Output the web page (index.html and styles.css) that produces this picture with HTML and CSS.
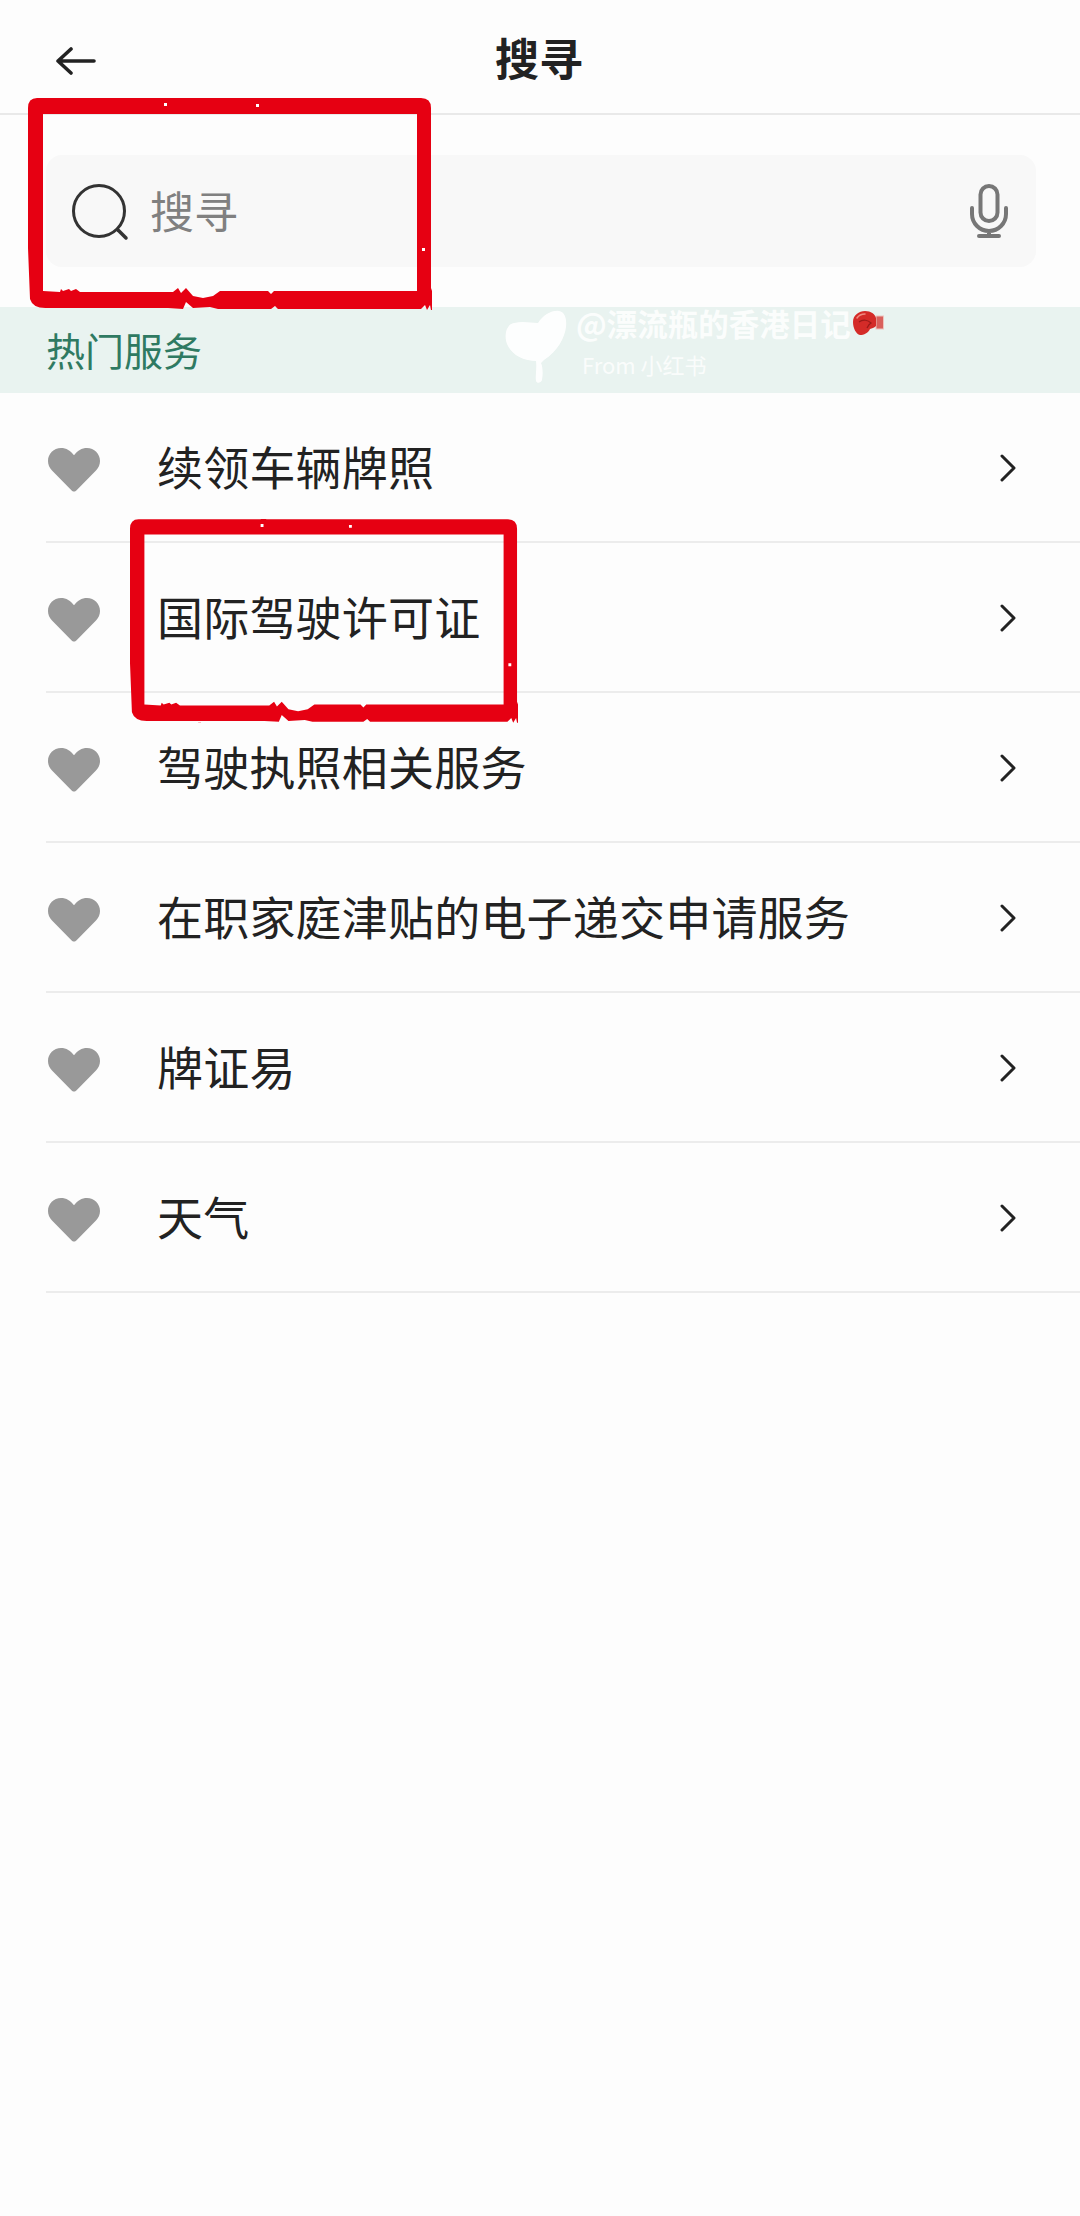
FILE: index.html
```html
<!DOCTYPE html>
<html lang="zh-CN">
<head>
<meta charset="utf-8">
<title>搜寻</title>
<link rel="stylesheet" href="styles.css">
</head>
<body>
<svg class="defs" width="0" height="0" aria-hidden="true">
  <symbol id="heart" viewBox="0 0 52 44"><path d="M26 43.500c-1 0-1.800-.5-2.600-1.300L4 22.500C1.300 19.700 0 16.500 0 13 0 5.800 5.800 0 13 0c5.200 0 9.800 2.600 13 7.300C29.200 2.600 33.800 0 39 0c7.200 0 13 5.800 13 13 0 3.500-1.300 6.700-4 9.500L28.600 42.200c-.8.800-1.600 1.300-2.600 1.300z"/></symbol>
  <symbol id="chev" viewBox="0 0 16 28"><path d="M2 2l12 12L2 26" fill="none" stroke="currentColor" stroke-width="3" stroke-linecap="round" stroke-linejoin="round"/></symbol>
  <symbol id="stamp" viewBox="0 0 404 212">
    <path fill-rule="evenodd" d="M9 0H136L139-2 142 0H393Q403 0 403 10V190L405 196V205L406 212H403L402 207 399 212 397 207 393 211H250L247 208 243 211H190L182 209 165 210 158 204 155 211 140 210H20Q5 211 2 201L0 150V105L-2 101 0 98V10Q0 0 9 0ZM15 16V193L32 194 33 191 35 193 41 191 43 193 48 191 52 194H145L150 190 153 195 158 190 165 198 175 200 185 198 192 193H240L243 196 246 193H389V16Z"/>
    <path d="M-12 210h3v3h-3zM35 213h2v2h-2zM71 212h3v3h-3zM407 209h3v3h-3z"/>
    <path d="M136 5h3v3h-3zM228 6h3v3h-3zM394 150h3v3h-3z" fill="#fff"/>
  </symbol>
</svg>
<main class="screen">
  <header class="topbar">
    <svg class="back" viewBox="0 0 40 28" aria-hidden="true"><path d="M38 14H2M15 2L2 14l13 12" fill="none" stroke="#222" stroke-width="3.600" stroke-linecap="round" stroke-linejoin="round"/></svg>
    <h1 class="title">搜寻</h1>
  </header>

  <section class="search-wrap">
    <div class="search">
      <svg class="search-icon" viewBox="0 0 58 58" aria-hidden="true"><circle cx="27" cy="27" r="25.500" fill="none" stroke="#333" stroke-width="3"/><path d="M46 46l8 8" fill="none" stroke="#333" stroke-width="3.500" stroke-linecap="round"/></svg>
      <span class="placeholder">搜寻</span>
      <svg class="mic" viewBox="0 0 38 54" aria-hidden="true"><g fill="none" stroke="#777" stroke-width="4" stroke-linecap="round"><rect x="10.500" y="2" width="17" height="35" rx="8.500"/><path d="M2 24v6a17 17 0 0 0 34 0v-6M19 47v5M9 52h20"/></g></svg>
    </div>
  </section>

  <section class="band">
    <h2 class="band-title">热门服务</h2>
    <div class="watermark">
      <svg class="sprout" viewBox="0 0 62 74" aria-hidden="true"><path fill="#fff" d="M33 13C38 5 47 0 54 1c6 1 8 8 7 16-1 10-8 24-22 33l-3 3c2 4 2 12 1 17-1 3-5 4-6 1-1-5 1-12 0-20-11 0-23-5-28-15C-2 27 1 14 9 13c9-2 17 0 24 0z"/></svg>
      <div class="wm-text">
        <div class="wm-name">@漂流瓶的香港日记<svg class="glove" viewBox="0 0 32 26" aria-hidden="true"><rect x="24" y="6" width="7.500" height="13" fill="#d9605c" stroke="#eec4bd"/><path fill="#d42b28" d="M1 12C1 5 7 1 13 1c6 0 10 3 11 7v8c-2 2-4 2-6 3-2 4-6 6-10 6-4-1-7-7-7-13z"/><path d="M7 12c4-3 9-2 12 1-2 1-3 3-4 5" fill="none" stroke="#9a1a18" stroke-width="1.200"/><path d="M5 8c2-3 5-4 8-4" fill="none" stroke="#f08a80" stroke-width="1.500" stroke-linecap="round"/></svg></div>
        <div class="wm-from">From 小红书</div>
      </div>
    </div>
  </section>

  <ul class="list">
    <li class="row"><svg class="heart"><use href="#heart"/></svg><span class="label">续领车辆牌照</span><svg class="chev"><use href="#chev"/></svg></li>
    <li class="row"><svg class="heart"><use href="#heart"/></svg><span class="label">国际驾驶许可证</span><svg class="chev"><use href="#chev"/></svg></li>
    <li class="row"><svg class="heart"><use href="#heart"/></svg><span class="label">驾驶执照相关服务</span><svg class="chev"><use href="#chev"/></svg></li>
    <li class="row"><svg class="heart"><use href="#heart"/></svg><span class="label">在职家庭津贴的电子递交申请服务</span><svg class="chev"><use href="#chev"/></svg></li>
    <li class="row"><svg class="heart"><use href="#heart"/></svg><span class="label">牌证易</span><svg class="chev"><use href="#chev"/></svg></li>
    <li class="row"><svg class="heart"><use href="#heart"/></svg><span class="label">天气</span><svg class="chev"><use href="#chev"/></svg></li>
  </ul>

  <svg class="stamp stamp-search" aria-hidden="true"><use href="#stamp"/></svg>
  <svg class="stamp stamp-row" aria-hidden="true"><use href="#stamp"/></svg>
</main>
</body>
</html>
```

FILE: styles.css
```css
* { box-sizing: border-box; }
html, body { margin: 0; padding: 0; }
body {
  background: #fdfdfd;
  color: #222;
  font-family: "Noto Sans CJK SC", "Noto Sans", sans-serif;
}
.defs { position: absolute; }
.screen {
  position: relative;
  width: 1080px;
  height: 2216px;
  overflow: hidden;
}
.topbar {
  position: relative;
  height: 115px;
  border-bottom: 2px solid #e9e9e9;
  display: flex;
  align-items: center;
  justify-content: center;
  padding-bottom: 0;
}
.back {
  position: absolute;
  left: 56px;
  top: 47px;
  width: 40px;
  height: 28px;
}
.title {
  margin: 0;
  font-size: 44px;
  line-height: 60px;
  font-weight: 700;
  color: #222;
  transform: translateX(-1px);
}
.search-wrap { padding: 40px 44px 40px 46px; }
.search {
  height: 112px;
  background: #f8f8f8;
  border-radius: 16px;
  display: flex;
  align-items: center;
  padding: 0 28px 0 26px;
}
.search-icon { width: 58px; height: 58px; margin-top: 4px; flex: none; }
.placeholder {
  margin-left: 20px;
  margin-top: -2px;
  font-size: 44px;
  line-height: 60px;
  color: #808080;
  flex: 1;
}
.mic { width: 38px; height: 54px; flex: none; }
.band {
  position: relative;
  height: 86px;
  background: #e9f3f0;
  padding-left: 46px;
  display: flex;
  align-items: center;
}
.band-title {
  margin: -3px 0 0;
  font-size: 39px;
  line-height: 52px;
  font-weight: 400;
  color: #2f7a62;
}
.watermark {
  position: absolute;
  left: 505px;
  top: -2px;
  display: flex;
  gap: 9px;
}
.sprout { width: 62px; height: 74px; flex: none; opacity: .95; margin-top: 5px; }
.wm-name {
  display: flex;
  align-items: center;
  font-size: 30.500px;
  line-height: 36px;
  font-weight: 700;
  color: rgba(255, 255, 255, .85);
  white-space: nowrap;
}
.glove { width: 32px; height: 26px; flex: none; margin-left: 1px; }
.wm-from {
  margin: 9px 0 0 6px;
  font-size: 22px;
  line-height: 28px;
  color: rgba(255, 255, 255, .8);
  white-space: nowrap;
}
.list { list-style: none; margin: 0; padding: 0 0 0 46px; }
.row {
  height: 150px;
  border-bottom: 2px solid #ececec;
  display: flex;
  align-items: center;
  padding-right: 64px;
}
.heart { width: 52px; height: 44px; margin: 5px 0 0 2px; fill: #999; flex: none; }
.label {
  margin-left: 57px;
  margin-top: -4px;
  font-size: 46px;
  letter-spacing: .2px;
  line-height: 64px;
  color: #222;
  flex: 1;
}
.chev { width: 16px; height: 28px; margin-top: 2px; color: #222; flex: none; }
.stamp { position: absolute; fill: #e60012; overflow: visible; }
.stamp-search { left: 28px; top: 98px; width: 404px; height: 212px; }
.stamp-row { left: 130px; top: 519px; width: 388px; height: 204px; }
```
